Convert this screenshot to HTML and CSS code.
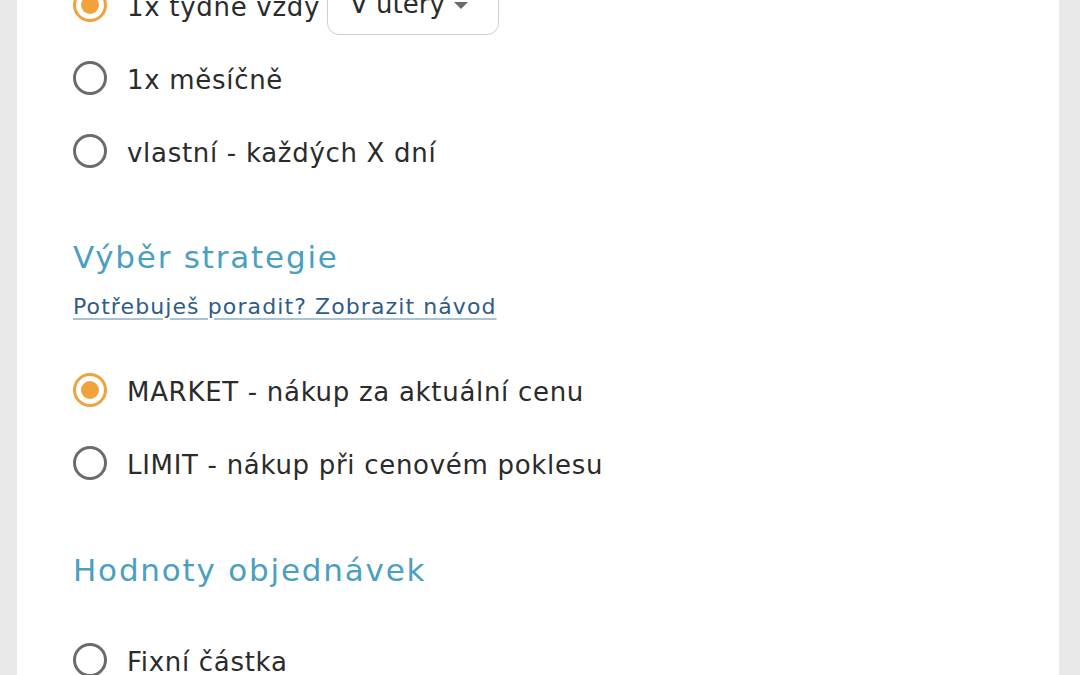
FILE: index.html
```html
<!DOCTYPE html>
<html lang="cs">
<head>
<meta charset="utf-8">
<link rel="stylesheet" href="styles.css">
</head>
<body>
<div class="card">
  <div class="group">
    <label class="row">
      <span class="radio checked"></span>
      <span class="label">1x týdně vždy</span>
      <span class="select">V úterý <span class="caret"></span></span>
    </label>
    <label class="row">
      <span class="radio"></span>
      <span class="label">1x měsíčně</span>
    </label>
    <label class="row">
      <span class="radio"></span>
      <span class="label">vlastní - každých X dní</span>
    </label>
  </div>

  <h2 class="heading">Výběr strategie</h2>
  <a class="help" href="#">Potřebuješ poradit? Zobrazit návod</a>
  <div class="group strategy">
    <label class="row">
      <span class="radio checked"></span>
      <span class="label">MARKET - nákup za aktuální cenu</span>
    </label>
    <label class="row">
      <span class="radio"></span>
      <span class="label">LIMIT - nákup při cenovém poklesu</span>
    </label>
  </div>

  <h2 class="heading values">Hodnoty objednávek</h2>
  <div class="group amounts">
    <label class="row">
      <span class="radio"></span>
      <span class="label">Fixní částka</span>
    </label>
  </div>
</div>
</body>
</html>
```

FILE: styles.css
```css
html, body {
  margin: 0;
  padding: 0;
}
body {
  background: #e9e9e9;
  font-family: "DejaVu Sans", "Open Sans", sans-serif;
  color: #2b2b2b;
  height: 675px;
  overflow: hidden;
}
.card {
  background: #ffffff;
  margin: -31.5px 21px 0 17px;
  padding: 0 56px 40px 56px;
  min-height: 800px;
}
.group {
  display: flex;
  flex-direction: column;
}
.row {
  display: flex;
  align-items: center;
  height: 73px;
}
.radio {
  width: 28px;
  height: 28px;
  border: 3px solid #6b6b6b;
  border-radius: 50%;
  box-sizing: content-box;
  flex: none;
  position: relative;
}
.radio.checked {
  border-color: #f2a23a;
}
.radio.checked::after {
  content: "";
  position: absolute;
  left: 5px;
  top: 5px;
  width: 18px;
  height: 18px;
  border-radius: 50%;
  background: #f2a23a;
}
.label {
  margin-left: 20px;
  padding-top: 3px;
  font-size: 26px;
  letter-spacing: 0.7px;
  color: #2b2b2b;
  white-space: nowrap;
}
.select {
  margin-left: 7px;
  display: flex;
  align-items: center;
  box-sizing: border-box;
  width: 172px;
  height: 56px;
  margin-top: 4px;
  padding: 0 30px 6px 22px;
  border: 1.5px solid #cfcfcf;
  border-radius: 12px;
  font-size: 26px;
  color: #2b2b2b;
  justify-content: space-between;
}
.caret {
  width: 0;
  height: 0;
  border-left: 7px solid transparent;
  border-right: 7px solid transparent;
  border-top: 7px solid #6b6b6b;
  margin-top: 2px;
}
.heading {
  margin: 44.5px 0 0 0;
  font-weight: 400;
  font-size: 31px;
  letter-spacing: 1.8px;
  line-height: 50px;
  color: #4b9fc1;
}
.help {
  display: block;
  width: max-content;
  font-size: 22px;
  letter-spacing: 1.1px;
  line-height: 40px;
  color: #2e5c88;
  text-decoration: underline;
  text-decoration-color: #a8c3d6;
  text-underline-offset: 4px;
  margin-top: 5px;
}
.strategy {
  margin-top: 26.5px;
}
.values {
  margin-top: 45.5px;
}
.amounts {
  margin-top: 28.5px;
}
```
